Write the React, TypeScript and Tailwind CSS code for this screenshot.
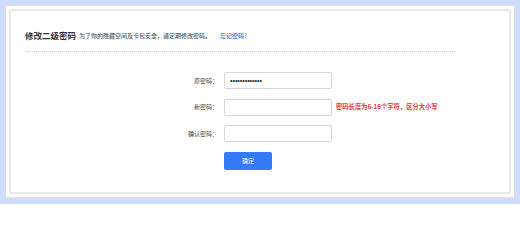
import React from "react";

const font = { fontFamily: '"Noto Sans CJK SC", "Liberation Sans", sans-serif' };

function Row({ label, children }: { label: string; children: React.ReactNode }) {
  return (
    <div className="flex items-center h-[17px]">
      <div className="w-[207px] text-right text-[6px] leading-none text-[#444]">{label}</div>
      <div className="ml-[6px] flex items-center">{children}</div>
    </div>
  );
}

export default function App() {
  return (
    <div className="w-[520px] h-[204px] bg-[#cddcfa] pt-[5px] px-[5px] pb-[6px]" style={font}>
      <div className="h-full bg-white border border-[#dedede] p-[3px]">
        <div className="h-full border-2 border-[#e9e9e9] bg-white">
          <div className="ml-[14px] w-[430px] h-[41px] border-b border-dotted border-[#d4d4d4] flex items-end pb-[12px]">
            <span className="text-[8.5px] font-bold text-[#333] leading-none">修改二级密码</span>
            <span className="ml-[3px] text-[6px] font-medium text-[#555] leading-none">为了你的隐藏空间及卡包安全，请定期修改密码。</span>
            <span className="ml-[9px] text-[6px] font-medium text-[#1f6fe0] leading-none">忘记密码?</span>
          </div>
          <div className="mt-[20px] flex flex-col gap-[9.5px]">
            <Row label="原密码：">
              <div className="w-[108px] h-[17px] border border-[#d6d6d6] rounded-[2px] flex items-center pl-[5px]">
                <span className="text-[7px] leading-none text-[#222] font-['Liberation_Sans',sans-serif]">•••••••••••••</span>
              </div>
            </Row>
            <Row label="新密码：">
              <div className="w-[108px] h-[17px] border border-[#d6d6d6] rounded-[2px]" />
              <span className="ml-[4px] text-[6.3px] font-bold text-[#e83a36] leading-none">
                密码长度为6-16个字符，区分大小写
              </span>
            </Row>
            <Row label="确认密码：">
              <div className="w-[108px] h-[17px] border border-[#d6d6d6] rounded-[2px]" />
            </Row>
            <div className="flex">
              <div className="w-[207px]" />
              <button className="ml-[6px] w-[48px] h-[18px] bg-[#3479f6] rounded-[2px] text-white text-[6px] leading-none flex items-center justify-center">
                确定
              </button>
            </div>
          </div>
        </div>
      </div>
    </div>
  );
}
